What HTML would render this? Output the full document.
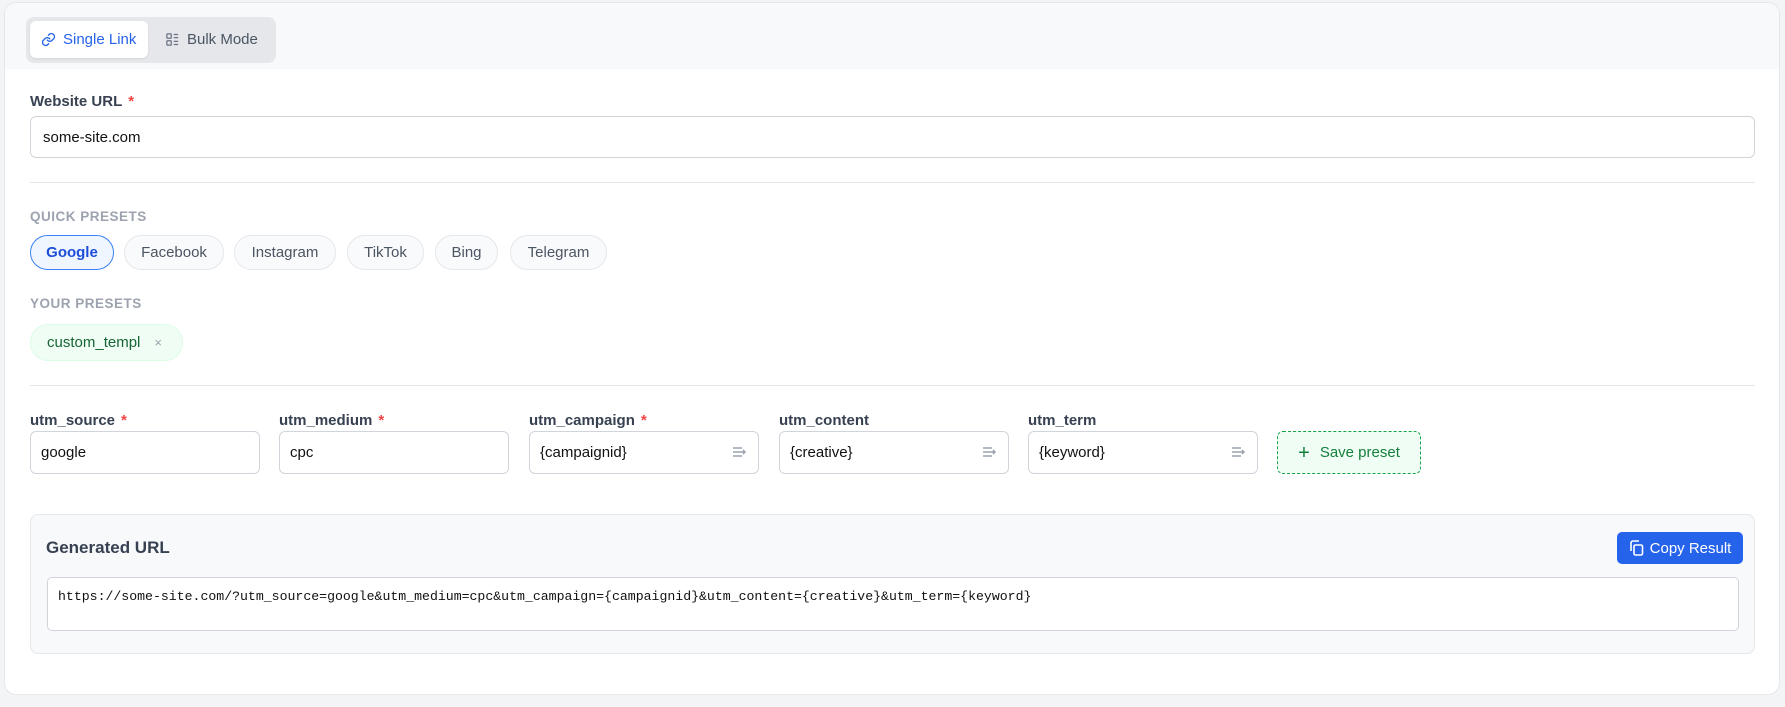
<!DOCTYPE html>
<html><head><meta charset="utf-8"><style>
*{box-sizing:border-box;margin:0;padding:0}
body{width:1785px;height:707px;background:#f3f4f6;font-family:"Liberation Sans",sans-serif;position:relative;overflow:hidden;color:#111827}
.card{position:absolute;left:4px;top:2px;width:1776px;height:693px;background:#fff;border:1px solid #e5e7eb;border-radius:12px;overflow:hidden}
.head{position:absolute;left:0;top:0;right:0;height:66px;background:#f8f9fb}
.a{position:absolute;white-space:nowrap}
.tabs{left:21px;top:14px;width:250px;height:46px;background:#e5e7eb;border-radius:8px}
.tab{position:absolute;top:4px;height:37px;display:flex;align-items:center;gap:7px;font-size:15px;border-radius:6px;padding:0 11px;white-space:nowrap}
.lbl{font-size:15px;font-weight:bold;color:#374151}
.req{color:#ef4444;margin-left:6px}
.inp{border:1px solid #d1d5db;border-radius:6px;background:#fff;display:flex;align-items:center;padding:0 10px;font-size:15px;color:#111}
.hr{height:1px;background:#e5e7eb;left:26px;width:1725px}
.sec{font-size:13.5px;font-weight:bold;color:#9ca3af;letter-spacing:.5px}
.chip{top:232px;height:35px;border:1px solid #e5e7eb;background:#f9fafb;border-radius:18px;display:flex;align-items:center;justify-content:center;font-size:15px;color:#4b5563}
.ic{position:absolute;right:10px;top:13px}
</style></head><body>
<div class="card">
<div class="head"></div>
<div class="a tabs">
 <div class="tab" style="left:4px;width:118px;background:#fff;color:#2563eb;box-shadow:0 1px 2px rgba(0,0,0,.08)">
  <svg width="15" height="15" viewBox="0 0 24 24" fill="none" stroke="#2563eb" stroke-width="2.2" stroke-linecap="round"><path d="M10 13a5 5 0 0 0 7.5.5l3-3a5 5 0 0 0-7-7l-1.7 1.7"/><path d="M14 11a5 5 0 0 0-7.5-.5l-3 3a5 5 0 0 0 7 7l1.7-1.7"/></svg>Single Link</div>
 <div class="tab" style="left:128px;color:#4b5563">
  <svg width="15" height="15" viewBox="0 0 24 24" fill="none" stroke="#6b7280" stroke-width="2"><rect x="3" y="3" width="7" height="7" rx="1"/><rect x="3" y="14" width="7" height="7" rx="1"/><path d="M14 4h7M14 9h7M14 15h7M14 20h7"/></svg>Bulk Mode</div>
</div>
<div class="a lbl" style="left:25px;top:90px">Website URL<span class="req">*</span></div>
<div class="a inp" style="left:25px;top:113px;width:1725px;height:42px;padding-left:12px">some-site.com</div>
<div class="a hr" style="top:179px;left:25px"></div>
<div class="a sec" style="left:25px;top:206px">QUICK PRESETS</div>
<div class="a chip" style="left:25px;width:84px;background:#eff6ff;border-color:#3b82f6;color:#1d4ed8;font-weight:bold">Google</div>
<div class="a chip" style="left:119px;width:100px">Facebook</div>
<div class="a chip" style="left:229px;width:102px">Instagram</div>
<div class="a chip" style="left:342px;width:77px">TikTok</div>
<div class="a chip" style="left:430px;width:63px">Bing</div>
<div class="a chip" style="left:505px;width:97px">Telegram</div>
<div class="a sec" style="left:25px;top:293px">YOUR PRESETS</div>
<div class="a chip" style="left:25px;top:321px;width:153px;height:37px;background:#f0fdf4;border-color:#dcfce7;color:#166534;justify-content:flex-start;padding-left:16px">custom_templ<span style="color:#9ca3af;font-size:13px;margin-left:14px">×</span></div>
<div class="a hr" style="top:382px;left:25px"></div>
<div class="a lbl" style="left:25px;top:409px">utm_source<span class="req">*</span></div>
<div class="a lbl" style="left:274px;top:409px">utm_medium<span class="req">*</span></div>
<div class="a lbl" style="left:524px;top:409px">utm_campaign<span class="req">*</span></div>
<div class="a lbl" style="left:774px;top:409px">utm_content</div>
<div class="a lbl" style="left:1023px;top:409px">utm_term</div>
<div class="a inp" style="left:25px;top:428px;width:230px;height:43px">google</div>
<div class="a inp" style="left:274px;top:428px;width:230px;height:43px">cpc</div>
<div class="a inp" style="left:524px;top:428px;width:230px;height:43px">{campaignid}<svg class="ic" width="16" height="14" viewBox="0 0 16 14" fill="none" stroke="#9ca3af" stroke-width="1.5"><path d="M1 3h9M1 7h12M1 11h9M11 5l2 2-2 2"/></svg></div>
<div class="a inp" style="left:774px;top:428px;width:230px;height:43px">{creative}<svg class="ic" width="16" height="14" viewBox="0 0 16 14" fill="none" stroke="#9ca3af" stroke-width="1.5"><path d="M1 3h9M1 7h12M1 11h9M11 5l2 2-2 2"/></svg></div>
<div class="a inp" style="left:1023px;top:428px;width:230px;height:43px">{keyword}<svg class="ic" width="16" height="14" viewBox="0 0 16 14" fill="none" stroke="#9ca3af" stroke-width="1.5"><path d="M1 3h9M1 7h12M1 11h9M11 5l2 2-2 2"/></svg></div>
<div class="a" style="left:1272px;top:428px;width:144px;height:43px;border:1.5px dashed #16a34a;border-radius:6px;background:#f0fdf4;color:#15803d;font-size:15px;display:flex;align-items:center;justify-content:center;gap:10px"><span style="font-size:20px;line-height:1">+</span>Save preset</div>
<div class="a" style="left:25px;top:511px;width:1725px;height:140px;background:#f8f9fb;border:1px solid #e5e7eb;border-radius:8px">
 <div class="a" style="left:15px;top:23px;font-size:17px;font-weight:bold;color:#374151">Generated URL</div>
 <div class="a" style="left:1586px;top:17px;width:126px;height:32px;background:#2563eb;border-radius:5px;color:#fff;font-size:15px;display:flex;align-items:center;justify-content:center;gap:6px">
  <svg width="15" height="16" viewBox="0 0 15 16" fill="none" stroke="#fff" stroke-width="1.6"><rect x="5" y="5" width="8.5" height="10" rx="1.5"/><path d="M2 11V3a2 2 0 0 1 2-2h6"/></svg>Copy Result</div>
 <div class="a" style="left:16px;top:62px;width:1692px;height:54px;background:#fff;border:1px solid #d1d5db;border-radius:5px;font-family:'Liberation Mono',monospace;font-size:13.2px;padding:11px 10px;color:#111">https://some-site.com/?utm_source=google&amp;utm_medium=cpc&amp;utm_campaign={campaignid}&amp;utm_content={creative}&amp;utm_term={keyword}</div>
</div>
</div>
</body></html>
